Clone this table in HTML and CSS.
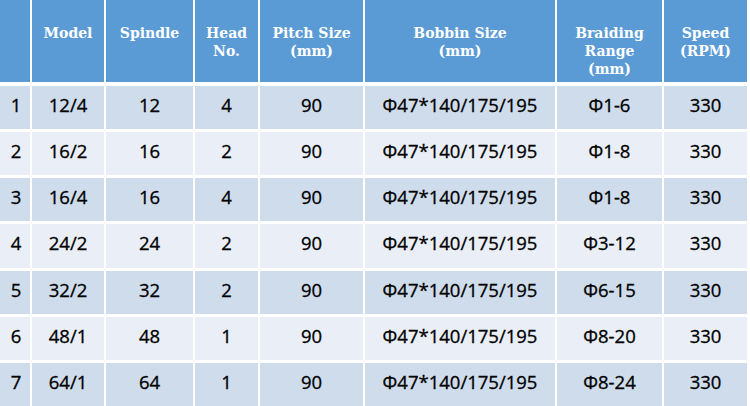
FILE: index.html
```html
<!DOCTYPE html>
<html>
<head>
<meta charset="utf-8">
<link rel="stylesheet" href="styles.css">
</head>
<body>
<div class="spec">
  <div class="hd"></div>
  <div class="hd">Model</div>
  <div class="hd">Spindle</div>
  <div class="hd">Head<br>No.</div>
  <div class="hd">Pitch Size<br>(mm)</div>
  <div class="hd">Bobbin Size<br>(mm)</div>
  <div class="hd">Braiding<br>Range<br>(mm)</div>
  <div class="hd">Speed<br>(RPM)</div>

  <div class="c odd idx">1</div><div class="c odd">12/4</div><div class="c odd">12</div><div class="c odd">4</div><div class="c odd">90</div><div class="c odd">Φ47*140/175/195</div><div class="c odd">Φ1-6</div><div class="c odd">330</div>

  <div class="c even idx">2</div><div class="c even">16/2</div><div class="c even">16</div><div class="c even">2</div><div class="c even">90</div><div class="c even">Φ47*140/175/195</div><div class="c even">Φ1-8</div><div class="c even">330</div>

  <div class="c odd idx">3</div><div class="c odd">16/4</div><div class="c odd">16</div><div class="c odd">4</div><div class="c odd">90</div><div class="c odd">Φ47*140/175/195</div><div class="c odd">Φ1-8</div><div class="c odd">330</div>

  <div class="c even idx">4</div><div class="c even">24/2</div><div class="c even">24</div><div class="c even">2</div><div class="c even">90</div><div class="c even">Φ47*140/175/195</div><div class="c even">Φ3-12</div><div class="c even">330</div>

  <div class="c odd idx">5</div><div class="c odd">32/2</div><div class="c odd">32</div><div class="c odd">2</div><div class="c odd">90</div><div class="c odd">Φ47*140/175/195</div><div class="c odd">Φ6-15</div><div class="c odd">330</div>

  <div class="c even idx">6</div><div class="c even">48/1</div><div class="c even">48</div><div class="c even">1</div><div class="c even">90</div><div class="c even">Φ47*140/175/195</div><div class="c even">Φ8-20</div><div class="c even">330</div>

  <div class="c odd idx">7</div><div class="c odd">64/1</div><div class="c odd">64</div><div class="c odd">1</div><div class="c odd">90</div><div class="c odd">Φ47*140/175/195</div><div class="c odd">Φ8-24</div><div class="c odd">330</div>
</div>
</body>
</html>
```
FILE: styles.css
```css
html, body {
  margin: 0;
  padding: 0;
  background: #ffffff;
}
.spec {
  display: grid;
  grid-template-columns: 30px 72px 87px 63px 103px 190px 105px 83px;
  grid-template-rows: 83px repeat(7, 1fr);
  column-gap: 2px;
  row-gap: 3px;
  width: 750px;
  height: 406px;
}
.hd {
  background: #5b9bd5;
  color: #ffffff;
  font-family: "DejaVu Serif", serif;
  font-weight: bold;
  font-size: 14px;
  line-height: 18px;
  text-align: center;
  padding-top: 24px;
  margin-bottom: 1px;
  box-sizing: border-box;
}
.c {
  display: flex;
  align-items: center;
  justify-content: center;
  font-family: "Open Sans", sans-serif;
  font-size: 18.5px;
  color: #000000;
  -webkit-text-stroke: 0.3px #000000;
  padding-bottom: 6px;
  box-sizing: border-box;
}
.odd {
  background: #cfdcec;
}
.even {
  background: #e9eef7;
}
.idx {
  padding-left: 2px;
}
```
